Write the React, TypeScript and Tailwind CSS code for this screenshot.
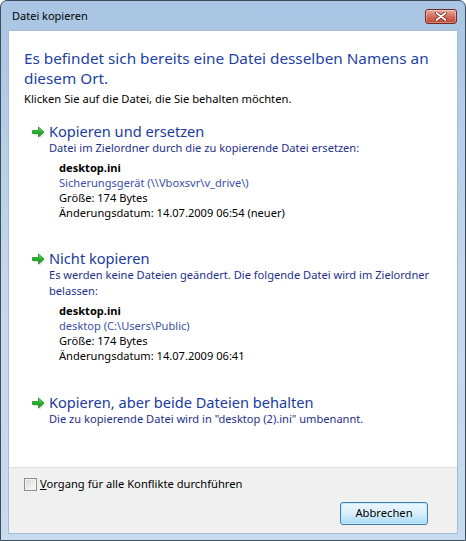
import React from "react";

const font = { fontFamily: '"Noto Sans", "Open Sans", sans-serif' };

function GreenArrow() {
  return (
    <svg width="16" height="14" viewBox="0 0 16 14" className="shrink-0">
      <defs>
        <linearGradient id="ga" x1="0" y1="0" x2="0" y2="1">
          <stop offset="0" stopColor="#7fe07a" />
          <stop offset="0.5" stopColor="#26b32a" />
          <stop offset="1" stopColor="#138a1c" />
        </linearGradient>
      </defs>
      <path d="M2 6.5 H8 V3 L13.5 8 L8 13 V9.5 H2 Z" fill="#000" opacity="0.12" transform="translate(0.6 0.8)" />
      <path d="M1.5 5.5 H7.5 V2 L13 7 L7.5 12 V8.5 H1.5 Z" fill="url(#ga)" stroke="#1c8a22" strokeWidth="0.8" strokeLinejoin="round" />
    </svg>
  );
}

function CloseButton() {
  return (
    <div className="w-[32px] h-[15px] rounded-[3px] border border-[#6e2a22] bg-gradient-to-b from-[#e9aa9e] via-[#d46e5b] to-[#c0422e] flex items-center justify-center shadow-[inset_0_0_0_1px_rgba(255,255,255,0.35)]">
      <svg width="12" height="9" viewBox="0 0 12 9">
        <path d="M1.5 1 L10.5 8 M10.5 1 L1.5 8" stroke="#5a2018" strokeWidth="3.2" strokeLinecap="round" />
        <path d="M1.5 1 L10.5 8 M10.5 1 L1.5 8" stroke="#ffffff" strokeWidth="1.8" strokeLinecap="round" />
      </svg>
    </div>
  );
}

type Detail = { path: string; size: string; date: string };

function Option({
  title,
  desc,
  detail,
}: {
  title: string;
  desc: React.ReactNode;
  detail?: Detail;
}) {
  return (
    <div className="flex">
      <div className="w-[18px] pt-[3px]">
        <GreenArrow />
      </div>
      <div className="flex flex-col">
        <div className="text-[14.6px] leading-[18px] text-[#1a3a9e]">{title}</div>
        <div className="text-[11.1px] leading-[16px] text-[#1e2f8c]">{desc}</div>
        {detail && (
          <div className="pl-[10px] mt-[4px] text-[11.1px] leading-[15px] text-black">
            <div className="font-bold">desktop.ini</div>
            <div className="text-[#3a4fa8]">{detail.path}</div>
            <div>{detail.size}</div>
            <div>{detail.date}</div>
          </div>
        )}
      </div>
    </div>
  );
}

export default function App() {
  return (
    <div
      className="w-[466px] h-[541px] border border-[#3e4c5c] rounded-t-[7px] bg-gradient-to-b from-[#a9c5e3] via-[#c3d7ee] to-[#c6daf0] flex flex-col px-[7px] pb-[6px]"
      style={font}
    >
      <div className="h-[29px] flex items-center justify-between pl-[4px] pr-[1px] pt-[2px]">
        <span className="text-[11px] text-black">Datei kopieren</span>
        <CloseButton />
      </div>
      <div className="flex-1 flex flex-col border border-[#a6bcd6]">
        <div className="flex-1 bg-white pl-[15px] pt-[17px]">
          <div className="text-[15.3px] leading-[20px] text-[#1d3fa3] whitespace-nowrap">
            Es befindet sich bereits eine Datei desselben Namens an
            <br />
            diesem Ort.
          </div>
          <div className="mt-[3px] text-[11.2px] leading-[16px] text-black">
            Klicken Sie auf die Datei, die Sie behalten möchten.
          </div>
          <div className="mt-[15px] pl-[7px] flex flex-col">
            <Option
              title="Kopieren und ersetzen"
              desc="Datei im Zielordner durch die zu kopierende Datei ersetzen:"
              detail={{
                path: "Sicherungsgerät (\\\\Vboxsvr\\v_drive\\)",
                size: "Größe: 174 Bytes",
                date: "Änderungsdatum: 14.07.2009 06:54 (neuer)",
              }}
            />
            <div className="h-[29px]" />
            <Option
              title="Nicht kopieren"
              desc={
                <>
                  Es werden keine Dateien geändert. Die folgende Datei wird im Zielordner
                  <br />
                  belassen:
                </>
              }
              detail={{
                path: "desktop (C:\\Users\\Public)",
                size: "Größe: 174 Bytes",
                date: "Änderungsdatum: 14.07.2009 06:41",
              }}
            />
            <div className="h-[30px]" />
            <Option
              title="Kopieren, aber beide Dateien behalten"
              desc={'Die zu kopierende Datei wird in "desktop (2).ini" umbenannt.'}
            />
          </div>
        </div>
        <div className="h-[66px] bg-[#f0f0f0] border-t border-[#dfdfdf] flex flex-col pl-[15px] pr-[29px] pt-[8px]">
          <label className="flex items-center gap-[3px] text-[11.2px] text-black leading-[16px]">
            <span className="w-[13px] h-[13px] border border-[#8e8f8f] bg-gradient-to-br from-[#d8d8d8] to-[#fbfbfb] shadow-[inset_0_0_0_1px_#f4f4f4]" />
            <span>
              <span className="underline">V</span>organg für alle Konflikte durchführen
            </span>
          </label>
          <div className="flex justify-end mt-[10px]">
            <button className="w-[88px] h-[23px] rounded-[3px] border border-[#3c7fb1] bg-gradient-to-b from-[#eaf6fd] via-[#d9f0fc] to-[#a7d9f5] shadow-[inset_0_0_0_1px_#c8eafc] text-[11.2px] text-black">
              Abbrechen
            </button>
          </div>
        </div>
      </div>
    </div>
  );
}
